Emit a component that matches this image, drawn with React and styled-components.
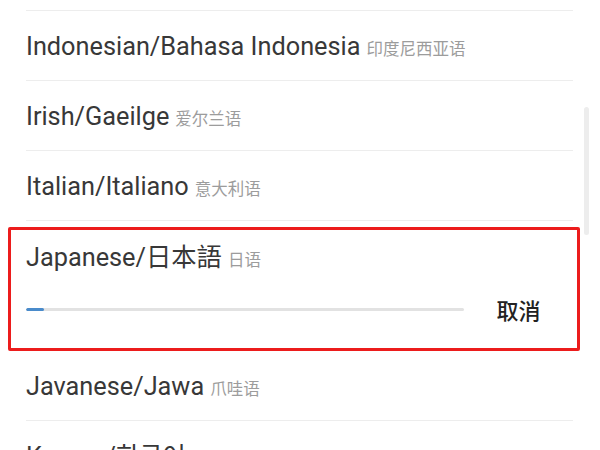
import React from "react";
import styled, { createGlobalStyle } from "styled-components";

const Global = createGlobalStyle`
  html, body { margin: 0; padding: 0; background: #ffffff; }
  body { font-family: Roboto, "Noto Sans CJK SC", sans-serif; }
`;

const Screen = styled.div`
  position: relative;
  width: 600px;
  height: 450px;
  overflow: hidden;
  background: #ffffff;
`;

const List = styled.ul`
  list-style: none;
  margin: -59px 0 0 0;
  padding: 0 27px 0 26px;
`;

const Row = styled.li`
  position: relative;
  box-sizing: border-box;
  height: ${(p) => (p.$expanded ? "130px" : "70px")};
  border-bottom: 1px solid #ededed;
  display: flex;
  flex-direction: column;
  justify-content: ${(p) => (p.$expanded ? "flex-start" : "center")};
  padding-top: ${(p) => (p.$expanded ? "22px" : "4px")};
`;

const Title = styled.div`
  display: flex;
  align-items: baseline;
  line-height: 30px;
  white-space: nowrap;
`;

const Name = styled.span`
  font-size: 25.3px;
  color: #383838;
`;

const Native = styled.span`
  margin-left: 6px;
  font-size: 16.5px;
  color: #9c9c9c;
  font-family: "Noto Sans CJK SC", sans-serif;
`;

const ProgressRow = styled.div`
  display: flex;
  align-items: center;
  height: 70px;
`;

const Track = styled.div`
  flex: 1;
  height: 3px;
  border-radius: 2px;
  background: #e2e2e2;
  overflow: hidden;
`;

const Fill = styled.div`
  height: 100%;
  border-radius: 2px;
  background: #4a8bcb;
`;

const Cancel = styled.button`
  width: 109px;
  border: none;
  background: none;
  padding: 0;
  font-family: "Noto Sans CJK SC", sans-serif;
  font-size: 22px;
  font-weight: 500;
  color: #222222;
  text-align: center;
`;

const Highlight = styled.div`
  position: absolute;
  left: -18px;
  right: -7px;
  top: 6px;
  bottom: -1px;
  border: 3px solid #ec1c1c;
  border-radius: 2px;
  pointer-events: none;
`;

const Scrollbar = styled.div`
  position: absolute;
  left: 584px;
  top: 107px;
  width: 5px;
  height: 128px;
  border-radius: 3px;
  background: #ededed;
`;

const languages = [
  { name: "Hungarian/Magyar", native: "匈牙利语" },
  { name: "Indonesian/Bahasa Indonesia", native: "印度尼西亚语" },
  { name: "Irish/Gaeilge", native: "爱尔兰语" },
  { name: "Italian/Italiano", native: "意大利语" },
  { name: "Japanese/日本語", native: "日语", downloading: 0.04 },
  { name: "Javanese/Jawa", native: "爪哇语" },
  { name: "Korean/한국어", native: "韩语" },
];

export default function App() {
  return (
    <>
      <Global />
      <Screen>
        <List>
          {languages.map((l) => (
            <Row key={l.name} $expanded={l.downloading !== undefined}>
              <Title>
                <Name>{l.name}</Name>
                <Native>{l.native}</Native>
              </Title>
              {l.downloading !== undefined && (
                <>
                  <ProgressRow>
                    <Track>
                      <Fill style={{ width: `${l.downloading * 100}%` }} />
                    </Track>
                    <Cancel>取消</Cancel>
                  </ProgressRow>
                  <Highlight />
                </>
              )}
            </Row>
          ))}
        </List>
        <Scrollbar />
      </Screen>
    </>
  );
}
